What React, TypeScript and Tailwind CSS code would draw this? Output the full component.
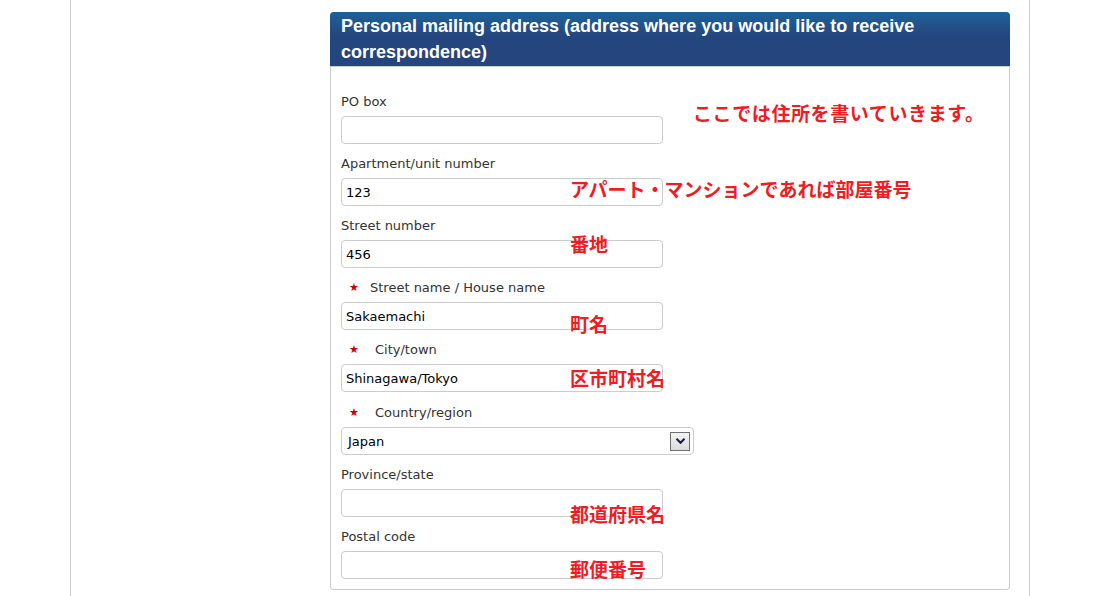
import type { ReactNode } from "react";

const font = { fontFamily: '"DejaVu Sans", Verdana, sans-serif' };

function Label({
  children,
  required,
  indent = "pl-[29px]",
}: {
  children: ReactNode;
  required?: boolean;
  indent?: string;
}) {
  return (
    <div className="relative h-4 text-[13px] leading-4 text-[#333]">
      {required ? (
        <>
          <span className="absolute left-[8px] top-0 text-[11px] text-[#cc0000]">
            ★
          </span>
          <span className={indent}>{children}</span>
        </>
      ) : (
        children
      )}
    </div>
  );
}

function TextField({ value = "" }: { value?: string }) {
  return (
    <div className="mt-[6px] flex h-[28px] w-[322px] items-center rounded-[4px] border border-[#cccccc] bg-white pl-[4px] pt-[2px] text-[13px] text-black">
      {value}
    </div>
  );
}

function SelectField({ value }: { value: string }) {
  return (
    <div className="mt-[6px] flex h-[28px] w-[353px] items-center justify-between rounded-[4px] border border-[#cccccc] bg-white pl-[6px] pr-[3px] text-[13px] text-black">
      <span className="pt-[2px]">{value}</span>
      <span className="flex h-[19px] w-[20px] items-center justify-center border border-[#707070] bg-gradient-to-b from-[#f2f2f2] to-[#dcdcdc]">
        <svg width="11" height="8" viewBox="0 0 11 8">
          <path d="M1.5 1.8 L5.5 5.8 L9.5 1.8" fill="none" stroke="#1a1a3a" strokeWidth="2" />
        </svg>
      </span>
    </div>
  );
}

function Note({
  top,
  left,
  wide,
  children,
}: {
  top: number;
  left: number;
  wide?: boolean;
  children: ReactNode;
}) {
  return (
    <div
      className={
        "pointer-events-none absolute whitespace-nowrap text-[19px] font-bold leading-6 text-[#ee1c25] " +
        (wide ? "tracking-[0.6px]" : "")
      }
      style={{ top, left, fontFamily: '"Noto Sans CJK JP", sans-serif' }}
    >
      {children}
    </div>
  );
}

export default function App() {
  return (
    <div className="min-h-[596px] bg-white" style={font}>
      <div className="ml-[70px] min-h-[596px] w-[960px] border-x border-[#cccccc] pl-[259px] pt-[12px]">
        <section className="relative w-[680px] rounded-[4px] border border-t-0 border-[#cccccc] pb-[10px]">
          <div
            className="-mx-px h-[54px] rounded-t-[4px] bg-gradient-to-b from-[#1a6399] via-[#25457e] via-45% to-[#25457e] px-[11px] pt-px text-[18px] font-bold leading-[26px] text-white"
            style={{ fontFamily: '"Liberation Sans", Arial, sans-serif' }}
          >
            Personal mailing address (address where you would like to receive
            correspondence)
          </div>
          <div className="border-t border-[#cccccc] pl-[10px] pt-[27px]">
            <Label>PO box</Label>
            <TextField />
            <div className="mt-[12px]">
              <Label>Apartment/unit number</Label>
              <TextField value="123" />
            </div>
            <div className="mt-[12px]">
              <Label>Street number</Label>
              <TextField value="456" />
            </div>
            <div className="mt-[12px]">
              <Label required>Street name / House name</Label>
              <TextField value="Sakaemachi" />
            </div>
            <div className="mt-[12px]">
              <Label required indent="pl-[34px]">
                City/town
              </Label>
              <TextField value="Shinagawa/Tokyo" />
            </div>
            <div className="mt-[13px]">
              <Label required indent="pl-[34px]">
                Country/region
              </Label>
              <SelectField value="Japan" />
            </div>
            <div className="mt-[12px]">
              <Label>Province/state</Label>
              <TextField />
            </div>
            <div className="mt-[12px]">
              <Label>Postal code</Label>
              <TextField />
            </div>
          </div>

          <Note top={89} left={362} wide>
            ここでは住所を書いていきます。
          </Note>
          <Note top={165} left={239}>アパート・マンションであれば部屋番号</Note>
          <Note top={220} left={239}>番地</Note>
          <Note top={300} left={239}>町名</Note>
          <Note top={354} left={239}>区市町村名</Note>
          <Note top={490} left={239}>都道府県名</Note>
          <Note top={545} left={239}>郵便番号</Note>
        </section>
      </div>
    </div>
  );
}
